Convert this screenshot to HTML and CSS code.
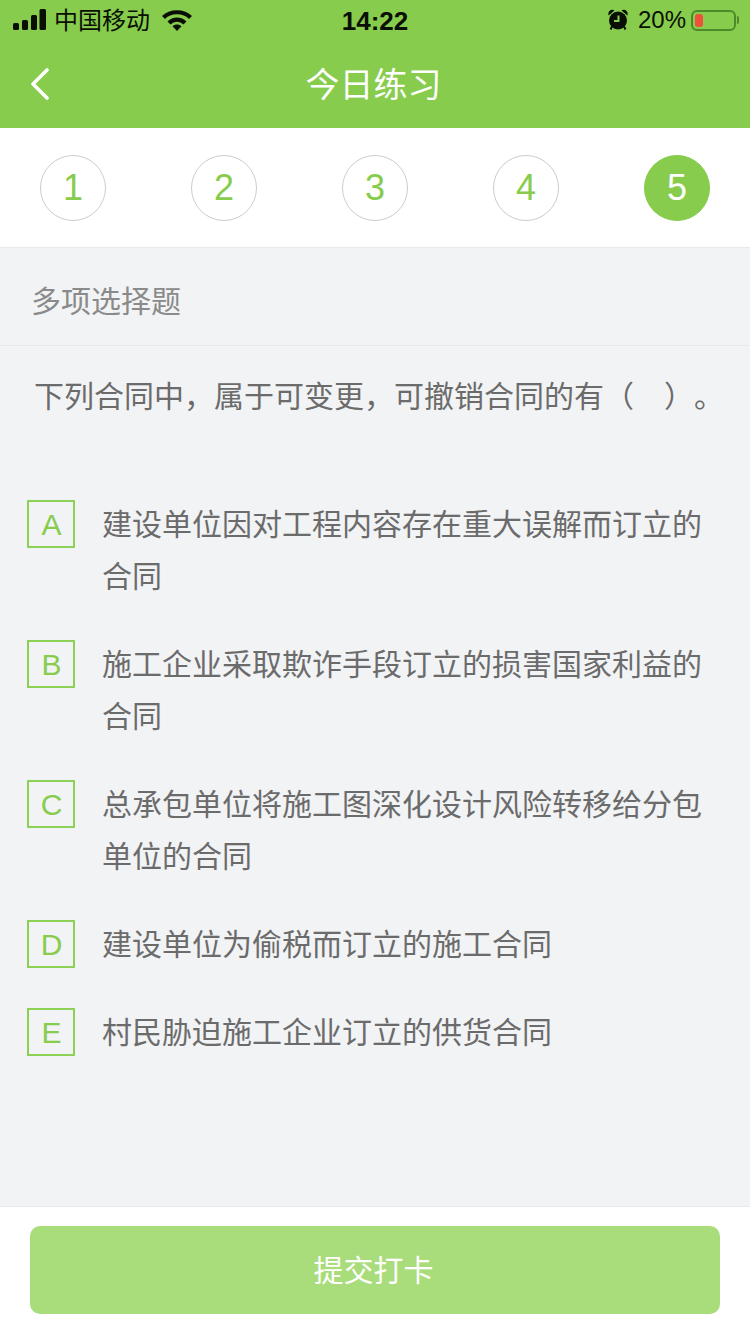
FILE: index.html
```html
<!DOCTYPE html>
<html lang="zh-CN">
  <head>
    <meta charset="UTF-8" />
    <meta name="viewport" content="width=device-width, initial-scale=1.0" />
    <title>今日练习</title>
    <link rel="stylesheet" href="styles.css">
  </head>
  <body>
    <div id="page">
      <!-- status bar and nav share the green header -->
      <header class="header">
        <div class="status">
          <div class="status-left">
            <svg class="signal" width="33" height="21" viewBox="0 0 33 21">
              <rect x="0" y="14" width="6" height="7" rx="1.5" />
              <rect x="9" y="11" width="6" height="10" rx="1.5" />
              <rect x="18" y="6" width="6" height="15" rx="1.5" />
              <rect x="26.5" y="0" width="6.5" height="21" rx="1.5" />
            </svg>
            <span class="carrier">中国移动</span>
            <svg class="wifi" width="30" height="22" viewBox="0 0 30 22">
              <path d="M1.5 8.500C8.500 1.500 21.500 1.500 28.500 8.500" />
              <path d="M7 14C11.500 9.500 18.500 9.500 23 14" />
              <path class="wifi-dot" d="M15 22L10.500 17.200C13 15 17 15 19.500 17.200Z" />
            </svg>
          </div>
          <div class="time">14:22</div>
          <div class="status-right">
            <svg class="alarm" width="20" height="21" viewBox="0 0 20 21">
              <path d="M.5 6.500C-.5 2.500 3 -.5 6.500 1.500Z" />
              <path d="M19.500 6.500C20.500 2.500 17 -.5 13.500 1.500Z" />
              <circle cx="10" cy="11.500" r="9" />
              <path class="alarm-hand" d="M10.500 6.500V12H6" />
              <path class="alarm-leg" d="M4 17.500L2.500 20.500M16 17.500L17.500 20.500" />
            </svg>
            <span class="percent">20%</span>
            <div class="battery"><div class="battery-fill"></div></div>
            <div class="battery-tip"></div>
          </div>
        </div>
        <div class="nav">
          <a class="back">
            <svg width="20" height="32" viewBox="0 0 20 32">
              <path d="M17 2L3 16L17 30" />
            </svg>
          </a>
          <h1 class="nav-title">今日练习</h1>
          <span></span>
        </div>
      </header>

      <div class="steps">
        <div class="step">1</div>
        <div class="step">2</div>
        <div class="step">3</div>
        <div class="step">4</div>
        <div class="step active">5</div>
      </div>

      <div class="type">多项选择题</div>
      <div class="question">下列合同中，属于可变更，可撤销合同的有（　）。</div>

      <div class="options">
        <div class="option">
          <div class="letter">A</div>
          <div class="option-text">建设单位因对工程内容存在重大误解而订立的合同</div>
        </div>
        <div class="option">
          <div class="letter">B</div>
          <div class="option-text">施工企业采取欺诈手段订立的损害国家利益的合同</div>
        </div>
        <div class="option">
          <div class="letter">C</div>
          <div class="option-text">总承包单位将施工图深化设计风险转移给分包单位的合同</div>
        </div>
        <div class="option">
          <div class="letter">D</div>
          <div class="option-text">建设单位为偷税而订立的施工合同</div>
        </div>
        <div class="option">
          <div class="letter">E</div>
          <div class="option-text">村民胁迫施工企业订立的供货合同</div>
        </div>
      </div>

      <div class="footer">
        <button class="submit">提交打卡</button>
      </div>
    </div>
  </body>
</html>
```

FILE: styles.css
```css
* {
  box-sizing: border-box;
}
body {
  margin: 0;
  font-family: "Liberation Sans", "Noto Sans CJK SC", sans-serif;
}
#page {
  width: 750px;
  height: 1334px;
  display: flex;
  flex-direction: column;
  background: #f2f3f5;
  overflow: hidden;
}

/* header */
.header {
  height: 128px;
  background: #87cc4c;
}
.status {
  height: 40px;
  padding: 0 11px 0 13px;
  display: grid;
  grid-template-columns: 1fr auto 1fr;
  align-items: center;
  color: #0a0f05;
}
.status-left,
.status-right {
  display: flex;
  align-items: center;
}
.status-right {
  justify-content: flex-end;
}
.signal {
  fill: #0a0f05;
  margin: 0 8px 2px 0;
}
.carrier {
  font-size: 24px;
  margin: 0 12px 4px 0;
}
.wifi {
  fill: none;
  stroke: #0a0f05;
  stroke-width: 4.2;
}
.wifi-dot {
  fill: #0a0f05;
  stroke: none;
}
.time {
  font-size: 26px;
  font-weight: bold;
  margin: 2px 2px 0 0;
}
.alarm {
  fill: #0a0f05;
  margin: 0 10px 2px 0;
}
.alarm-hand {
  fill: none;
  stroke: #87cc4c;
  stroke-width: 2;
}
.alarm-leg {
  fill: none;
  stroke: #0a0f05;
  stroke-width: 2;
}
.percent {
  font-size: 24px;
  margin-right: 5px;
}
.battery {
  width: 45px;
  height: 21px;
  padding: 2px;
  border: 2px solid #4f8a2a;
  border-radius: 6px;
}
.battery-fill {
  width: 8px;
  height: 100%;
  background: #f0503a;
  border-radius: 3px;
}
.battery-tip {
  width: 2px;
  height: 8px;
  margin-left: 1px;
  background: #4f8a2a;
  border-radius: 0 2px 2px 0;
}
.nav {
  height: 88px;
  padding: 0 30px;
  display: grid;
  grid-template-columns: 1fr auto 1fr;
  align-items: center;
}
.back {
  display: flex;
}
.back path {
  fill: none;
  stroke: #fff;
  stroke-width: 3.6;
  stroke-linecap: round;
  stroke-linejoin: round;
}
.nav-title {
  margin: 0 3px 4px 0;
  font-size: 34px;
  font-weight: normal;
  color: #fff;
}

/* step circles */
.steps {
  height: 120px;
  padding: 27px 40px 0;
  display: flex;
  justify-content: space-between;
  align-items: flex-start;
  background: #fff;
  border-bottom: 1px solid #e8e9ec;
}
.step {
  width: 66px;
  height: 66px;
  display: flex;
  align-items: center;
  justify-content: center;
  border: 1px solid #ccc;
  border-radius: 50%;
  font-size: 36px;
  color: #87cc4c;
}
.step.active {
  background: #87cc4c;
  border-color: #87cc4c;
  color: #fff;
}

/* question */
.type {
  height: 98px;
  padding: 4px 0 0 31px;
  display: flex;
  align-items: center;
  font-size: 30px;
  color: #8a8a8a;
  border-bottom: 1px solid #e8e9ec;
}
.question {
  padding: 25px 0 0 34px;
  height: 154px;
  font-size: 30px;
  line-height: 52px;
  color: #6b6b6b;
  white-space: nowrap;
  text-spacing-trim: space-all;
}
.options {
  padding: 0 47px 0 27px;
  display: flex;
  flex-direction: column;
  gap: 36px;
}
.option {
  display: flex;
  gap: 27px;
}
.letter {
  flex: none;
  width: 48px;
  height: 48px;
  padding: 2px 0 0 1px;
  display: flex;
  align-items: center;
  justify-content: center;
  border: 2px solid #8dd056;
  font-size: 30px;
  color: #87cc4c;
}
.option-text {
  margin: -1px 0 1px;
  font-size: 30px;
  line-height: 52px;
  color: #6b6b6b;
}

/* footer */
.footer {
  margin-top: auto;
  height: 128px;
  padding: 19px 30px 0;
  background: #fff;
  border-top: 1px solid #e8e9ec;
}
.submit {
  width: 100%;
  height: 88px;
  padding: 0 3px 4px 0;
  border: 0;
  border-radius: 10px;
  background: #a9dc7a;
  color: #fff;
  font-family: inherit;
  font-size: 30px;
}
```
